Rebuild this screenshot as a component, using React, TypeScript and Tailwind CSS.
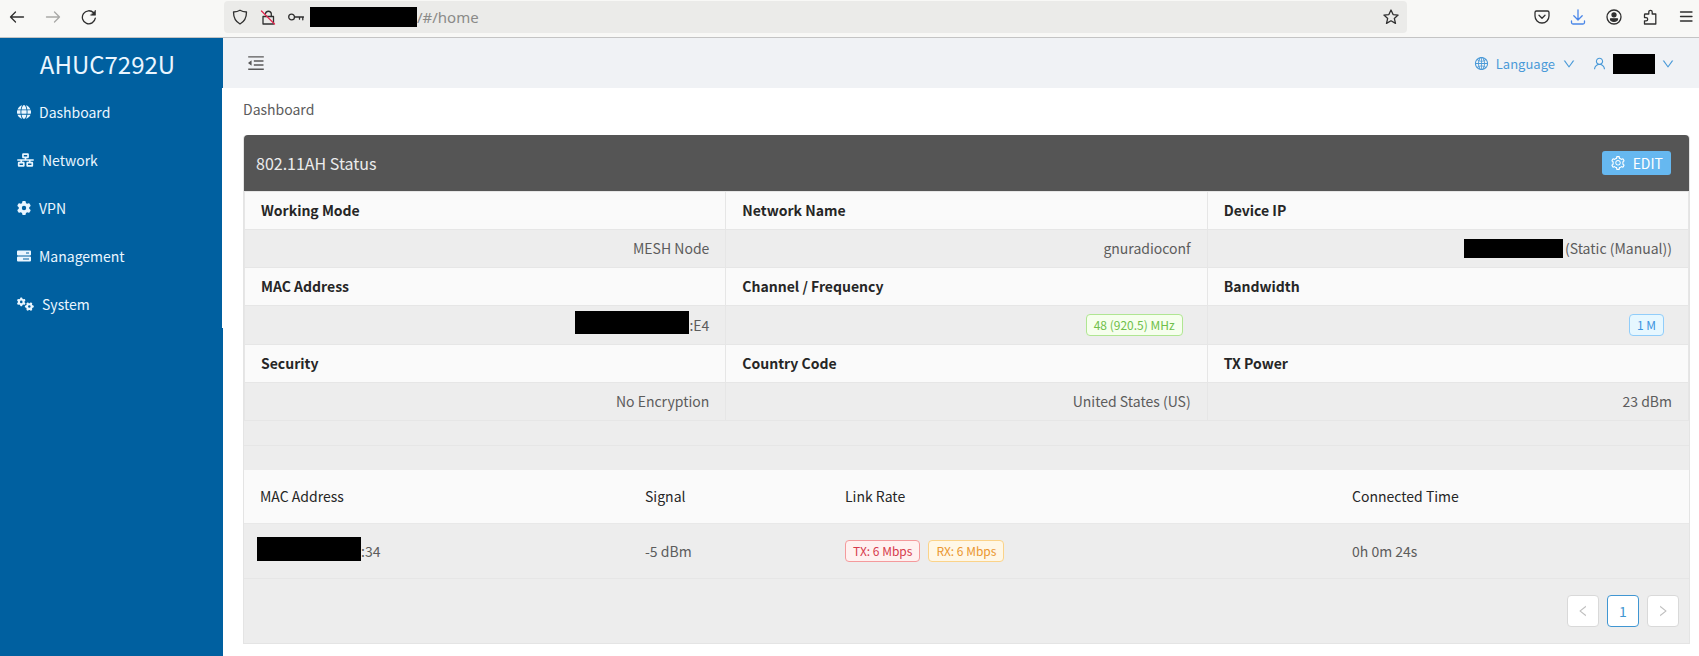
import { ReactNode } from "react";
import {
  AiOutlineDown,
  AiOutlineGlobal,
  AiOutlineLeft,
  AiOutlineMenuFold,
  AiOutlineRight,
  AiOutlineSetting,
  AiOutlineUser,
} from "react-icons/ai";
import { FaGear, FaGears, FaGlobe, FaNetworkWired } from "react-icons/fa6";

function Redacted({ className }: { className: string }) {
  return <span aria-hidden="true" className={`inline-block shrink-0 bg-black ${className}`} />;
}

function ChromeIcon({ children, className = "" }: { children: ReactNode; className?: string }) {
  return (
    <svg
      viewBox="0 0 16 16"
      className={`size-4 ${className}`}
      fill="none"
      stroke="currentColor"
      strokeWidth="1.3"
      strokeLinecap="round"
      strokeLinejoin="round"
      aria-hidden="true"
    >
      {children}
    </svg>
  );
}

function BrowserBar() {
  return (
    <div className="flex h-[38px] items-center border-b border-[#c4c4c4] bg-[#f8f8f6] pb-1 text-[#2f2f2f]">
      <div className="flex w-56 shrink-0 items-center gap-5 pl-[9px]">
        <button aria-label="Back">
          <ChromeIcon>
            <path d="M14.500 8H1.500M6.500 3 1.500 8l5 5" />
          </ChromeIcon>
        </button>
        <button aria-label="Forward" disabled className="text-[#a9a9a7]">
          <ChromeIcon>
            <path d="M1.500 8h13M9.500 3l5 5-5 5" />
          </ChromeIcon>
        </button>
        <button aria-label="Reload">
          <ChromeIcon>
            <path d="M14.300 9.200A6.500 6.500 0 1 1 12.600 3.800" />
            <path d="M14.500 1.500v4.700H9.800z" fill="currentColor" strokeWidth="0.6" />
          </ChromeIcon>
        </button>
      </div>
      <div className="flex h-8 flex-1 items-center rounded bg-[#ebebe9] px-2">
        <ChromeIcon>
          <path d="M8 1.200c2 1.200 4.200 1.700 6.500 1.800 0 5.500-1.500 9.300-6.500 12-5-2.700-6.500-6.500-6.500-12C3.800 2.900 6 2.400 8 1.200z" />
        </ChromeIcon>
        <ChromeIcon className="ml-3">
          <path d="M3 7.500h10.500v7.500H3zM5.500 4.500a3 3 0 0 1 5.800 0v3" />
          <path d="M1.500 2 14.500 15" stroke="#e22850" />
        </ChromeIcon>
        <ChromeIcon className="ml-3">
          <circle cx="3.600" cy="8" r="2.900" />
          <path d="M6.500 8h9M11.500 8v2.200M14.800 8v2.800" />
        </ChromeIcon>
        <Redacted className="ml-1.5 h-5 w-[107px]" />
        <span className="flex-1 font-['Noto_Sans',sans-serif] text-[15px] leading-5 text-[#8a8a88]">/#/home</span>
        <button aria-label="Bookmark">
          <ChromeIcon>
            <path d="m8 1 2.100 4.600 5 .5-3.800 3.300 1.200 5L8 11.800l-4.500 2.600 1.200-5L.9 6.100l5-.5z" />
          </ChromeIcon>
        </button>
      </div>
      <div className="flex w-[292px] shrink-0 items-center justify-end gap-5 pr-[5px]">
        <button aria-label="Pocket">
          <ChromeIcon>
            <path d="M2.500 2h11a1.500 1.500 0 0 1 1.500 1.500V7A7 7 0 0 1 1 7V3.500A1.500 1.500 0 0 1 2.500 2zM5 6.300l3 3 3-3" />
          </ChromeIcon>
        </button>
        <button aria-label="Downloads" className="text-[#4a86e8]">
          <ChromeIcon>
            <path d="M8 .8v10M3.800 6.800 8 11l4.200-4.200M1.500 12v1.500a1.500 1.500 0 0 0 1.500 1.500h10a1.500 1.500 0 0 0 1.500-1.500V12" />
          </ChromeIcon>
        </button>
        <button aria-label="Account">
          <ChromeIcon>
            <circle cx="8" cy="8" r="7" />
            <circle cx="8" cy="5.800" r="2" fill="currentColor" />
            <path d="M4.500 9.800h7c0 1.600-1.600 2.500-3.500 2.500s-3.500-.9-3.500-2.500z" fill="currentColor" />
          </ChromeIcon>
        </button>
        <button aria-label="Extensions">
          <ChromeIcon>
            <path d="M3.200 5h3.600V3a1.700 1.700 0 0 1 3.400 0v2h3.600v10H2.500v-3.200h1.600a1.600 1.600 0 0 0 0-3.200H2.500V5.700A.7.7 0 0 1 3.200 5z" />
          </ChromeIcon>
        </button>
        <button aria-label="Menu">
          <ChromeIcon>
            <path d="M2.500 3h11.500M2.500 7.500h11.500M2.500 12h11.500" />
          </ChromeIcon>
        </button>
      </div>
    </div>
  );
}

function ServerBars({ className }: { className: string }) {
  return (
    <svg viewBox="0 0 14 14" className={className} fill="currentColor" fillRule="evenodd" aria-hidden="true">
      <path d="M1 1.500h12a1 1 0 0 1 1 1v3a1 1 0 0 1-1 1H1a1 1 0 0 1-1-1v-3a1 1 0 0 1 1-1zM9 3.500v1h3v-1z" />
      <path d="M1 7.500h12a1 1 0 0 1 1 1v3a1 1 0 0 1-1 1H1a1 1 0 0 1-1-1v-3a1 1 0 0 1 1-1zM6 9.500v1h6v-1z" />
    </svg>
  );
}

const menu = [
  { label: "Dashboard", icon: FaGlobe, wide: false },
  { label: "Network", icon: FaNetworkWired, wide: true },
  { label: "VPN", icon: FaGear, wide: false },
  { label: "Management", icon: ServerBars, wide: false },
  { label: "System", icon: FaGears, wide: true },
];

function Sidebar() {
  return (
    <aside className="w-[223px] shrink-0 bg-[#0060a0] text-[#eaf6ff]">
      <h1 className="flex h-[50px] items-center justify-center pt-0.5 pr-2 text-2xl leading-8">AHUC7292U</h1>
      <nav className="flex flex-col border-r border-white">
        {menu.map(({ label, icon: Icon, wide }) => (
          <a key={label} href={`#/${label.toLowerCase()}`} className="flex h-12 items-center gap-2 pl-[17px]">
            <Icon className={wide ? "h-[14px] w-[17px]" : "size-[14px]"} />
            {label}
          </a>
        ))}
      </nav>
    </aside>
  );
}

type Tone = "green" | "blue" | "red" | "orange";

const tones: Record<Tone, string> = {
  green: "border-[#b0e692] bg-[#f6ffed] text-[#6fc04a]",
  blue: "border-[#91cdfa] bg-[#e6f7ff] text-[#3c94e0]",
  red: "border-[#f49a9c] bg-[#fff1f0] text-[#d63a4c]",
  orange: "border-[#fbd389] bg-[#fff7e6] text-[#ea962f]",
};

function Tag({ tone, children }: { tone: Tone; children: ReactNode }) {
  return (
    <span className={`mr-2 inline-block rounded border px-[7px] text-xs leading-5 ${tones[tone]}`}>{children}</span>
  );
}

const status: { names: string[]; values: ReactNode[]; height: string }[] = [
  {
    names: ["Working Mode", "Network Name", "Device IP"],
    height: "h-[38px]",
    values: [
      "MESH Node",
      "gnuradioconf",
      <span className="flex items-center justify-end gap-0.5">
        <Redacted className="h-[19px] w-[99px]" />
        (Static (Manual))
      </span>,
    ],
  },
  {
    names: ["MAC Address", "Channel / Frequency", "Bandwidth"],
    height: "h-[39px]",
    values: [
      <span className="flex items-center justify-end">
        <Redacted className="mb-1 h-[23px] w-[114px]" />
        :E4
      </span>,
      <Tag tone="green">48 (920.5) MHz</Tag>,
      <Tag tone="blue">1 M</Tag>,
    ],
  },
  {
    names: ["Security", "Country Code", "TX Power"],
    height: "h-[38px]",
    values: ["No Encryption", "United States (US)", "23 dBm"],
  },
];

function StatusTable() {
  return (
    <table className="w-full table-fixed border-collapse">
      {status.map(({ names, values, height }) => (
        <tbody key={names[0]}>
          <tr className="h-[38px] bg-[#fafafa] text-left text-[#262626]">
            {names.map((name) => (
              <th key={name} scope="col" className="border border-[#e6e6e6] px-4 pb-px font-bold">
                {name}
              </th>
            ))}
          </tr>
          <tr className={`text-right ${height}`}>
            {values.map((value, i) => (
              <td key={names[i]} className="border border-[#e6e6e6] px-4 pb-px">
                {value}
              </td>
            ))}
          </tr>
        </tbody>
      ))}
    </table>
  );
}

function PeerTable() {
  return (
    <table className="w-full table-fixed border-collapse">
      <colgroup>
        <col className="w-[385px]" />
        <col className="w-[200px]" />
        <col className="w-[507px]" />
        <col />
      </colgroup>
      <thead>
        <tr className="h-[53px] border-b border-[#e8e8e8] bg-[#fafafa] text-left text-[#262626]">
          {["MAC Address", "Signal", "Link Rate", "Connected Time"].map((h) => (
            <th key={h} scope="col" className="px-4 font-normal">
              {h}
            </th>
          ))}
        </tr>
      </thead>
      <tbody>
        <tr className="h-[55px] border-b border-[#e6e6e6]">
          <td className="pl-[13px]">
            <span className="flex items-center">
              <Redacted className="mb-1 h-6 w-[104px]" />
              :34
            </span>
          </td>
          <td className="px-4">-5 dBm</td>
          <td className="px-4">
            <Tag tone="red">TX: 6 Mbps</Tag>
            <Tag tone="orange">RX: 6 Mbps</Tag>
          </td>
          <td className="px-4">0h 0m 24s</td>
        </tr>
      </tbody>
    </table>
  );
}

function Pagination() {
  const base = "flex size-8 items-center justify-center rounded border bg-white";
  return (
    <nav aria-label="Pages" className="flex justify-end gap-2 px-[10px] py-4">
      <button aria-label="Previous page" disabled className={`${base} border-[#d9d9d9] text-[#bfbfbf]`}>
        <AiOutlineLeft className="size-[14px]" />
      </button>
      <button aria-current="page" className={`${base} border-[#4096d2] text-[#4096d2]`}>
        1
      </button>
      <button aria-label="Next page" disabled className={`${base} border-[#d9d9d9] text-[#bfbfbf]`}>
        <AiOutlineRight className="size-[14px]" />
      </button>
    </nav>
  );
}

export default function App() {
  return (
    <div className="flex min-h-screen flex-col bg-white font-['Noto_Sans_CJK_SC',sans-serif] text-sm leading-[22px] text-[#5c5c5c]">
      <BrowserBar />
      <div className="flex flex-1">
        <Sidebar />
        <div className="min-w-0 flex-1">
          <header className="flex h-[50px] items-center justify-between bg-[#f0f2f5] pr-6 pl-[23px] text-[13px]">
            <button aria-label="Collapse menu" className="text-[#595959]">
              <AiOutlineMenuFold className="size-5" />
            </button>
            <div className="flex items-center gap-4 pt-px text-[#4a9ad8]">
              <button className="flex items-center gap-[7px]">
                <AiOutlineGlobal className="size-[15px]" />
                Language
                <AiOutlineDown className="size-[14px]" />
              </button>
              <button aria-label="Account menu" className="flex items-center gap-[6px]">
                <AiOutlineUser className="size-[15px]" />
                <Redacted className="h-5 w-[42px]" />
                <AiOutlineDown className="size-[14px]" />
              </button>
            </div>
          </header>
          <main className="pr-[9px] pb-[11px] pl-5">
            <h2 className="flex h-[47px] items-center pb-[5px]">Dashboard</h2>
            <section className="rounded-t-sm border border-t-0 border-[#e4e4e4] bg-[#ededed]">
              <div className="flex h-14 items-center justify-between rounded-t-sm bg-[#555] pr-[18px] pl-3 text-[#ececec]">
                <h3 className="text-base leading-6">802.11AH Status</h3>
                <button className="flex h-6 items-center gap-[7px] rounded-[3px] bg-[#66b8f0] px-2 text-white">
                  <AiOutlineSetting className="size-4" />
                  EDIT
                </button>
              </div>
              <StatusTable />
              <div className="mb-6 h-[25px] border-b border-[#e6e6e6]" />
              <PeerTable />
              <Pagination />
            </section>
          </main>
        </div>
      </div>
    </div>
  );
}
